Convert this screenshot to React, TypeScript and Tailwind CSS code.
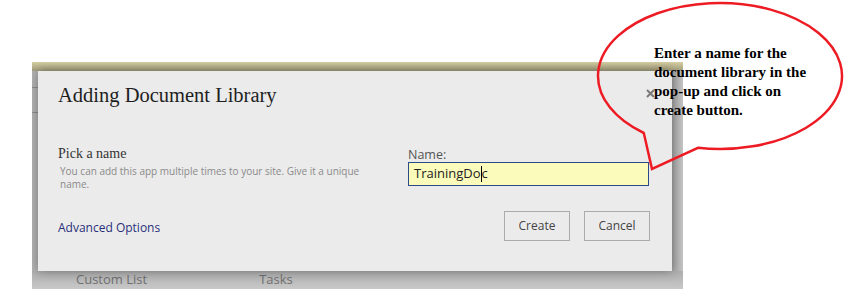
import React from 'react';

const sans = "font-['Open_Sans',sans-serif]";

const Callout: React.FC = () => (
  <>
    <svg className="absolute left-0 top-0 z-20 pointer-events-none" width={853} height={305}>
      <path
        d="M 698 147.8 A 122 73 0 1 0 643.8 133 L 652 169 Z"
        fill="none"
        stroke="#ed1c24"
        strokeWidth={2.5}
        strokeLinejoin="miter"
      />
    </svg>
    <div className="absolute z-20 left-[654px] top-[44px] font-['Liberation_Serif',serif] text-[15px] font-bold leading-[19px] text-black">
      <div>Enter a name for the</div>
      <div>document library in the</div>
      <div>pop-up and click on</div>
      <div>create button.</div>
    </div>
  </>
);

export default function App() {
  return (
    <div className="relative w-[853px] h-[305px] overflow-hidden bg-white">
      <div className="pt-[62px] pl-[32px]">
        <div className="w-[651px] h-[227px] bg-[#c4c4c4] flex flex-col overflow-hidden">
          <div className="h-[9px] bg-gradient-to-b from-[#d6cfa3] to-[#a29d7c]" />
          <div className="flex">
            <div className="w-[6px] h-[200px] bg-[#b3b3b3] flex flex-col">
              <div className="h-[16px]" />
              <div className="h-px bg-[#8e8e8e]" />
              <div className="h-[24px]" />
              <div className="h-px bg-[#8e8e8e]" />
            </div>
            <div className="relative z-10 w-[634px] h-[200px] bg-[#ebebeb] shadow-[0_0_10px_rgba(0,0,0,0.35)] flex flex-col pl-[20px] pr-[22px]">
              <div className="mt-[12px] font-['Liberation_Serif',serif] text-[20.5px] leading-[24px] text-[#1e1e1e]">
                Adding Document Library
              </div>
              <svg className="absolute left-[608px] top-[18px]" width={9} height={9} viewBox="0 0 9 9">
                <path d="M1 1 L8 8 M8 1 L1 8" stroke="#7a7a7a" strokeWidth={2} />
              </svg>
              <div className="mt-[38px] flex">
                <div className="w-[310px]">
                  <div className="font-['Liberation_Serif',serif] text-[14px] leading-[17px] text-[#333]">Pick a name</div>
                  <div className={`${sans} mt-[3px] text-[10px] leading-[13px] text-[#8a8a8a] pl-[2px]`}>
                    You can add this app multiple times to your site. Give it a unique name.
                  </div>
                </div>
                <div className="ml-[40px] w-[241px] pt-[2px]">
                  <div className={`${sans} text-[12.5px] leading-[15px] text-[#555]`}>Name:</div>
                  <div className={`${sans} h-[24px] border border-[#2b4a86] bg-[#fbfcbb] flex items-center pl-[5px] text-[13px] text-[#222]`}>
                    TrainingDo<span className="inline-block w-px h-[16px] bg-black" />c
                  </div>
                </div>
              </div>
              <div className="mt-auto mb-[30px] flex items-center">
                <div className={`${sans} mt-[4px] text-[12px] text-[#29307a]`}>Advanced Options</div>
                <div className="ml-auto flex gap-[14px]">
                  <button className={`${sans} w-[66px] h-[30px] border border-[#ababab] text-[12px] text-[#444]`}>Create</button>
                  <button className={`${sans} w-[66px] h-[30px] border border-[#ababab] text-[12px] text-[#444]`}>Cancel</button>
                </div>
              </div>
            </div>
            <div className="w-[11px] h-[200px] bg-gradient-to-r from-[#a4a4a4] to-[#c4c4c4]" />
          </div>
          <div className={`${sans} flex h-[18px] items-center text-[13px] text-[#707070] bg-gradient-to-b from-[#aeaeae] to-[#c8c8c8]`}>
            <span className="ml-[44px]">Custom List</span>
            <span className="ml-[112px]">Tasks</span>
          </div>
        </div>
      </div>
      <Callout />
    </div>
  );
}
